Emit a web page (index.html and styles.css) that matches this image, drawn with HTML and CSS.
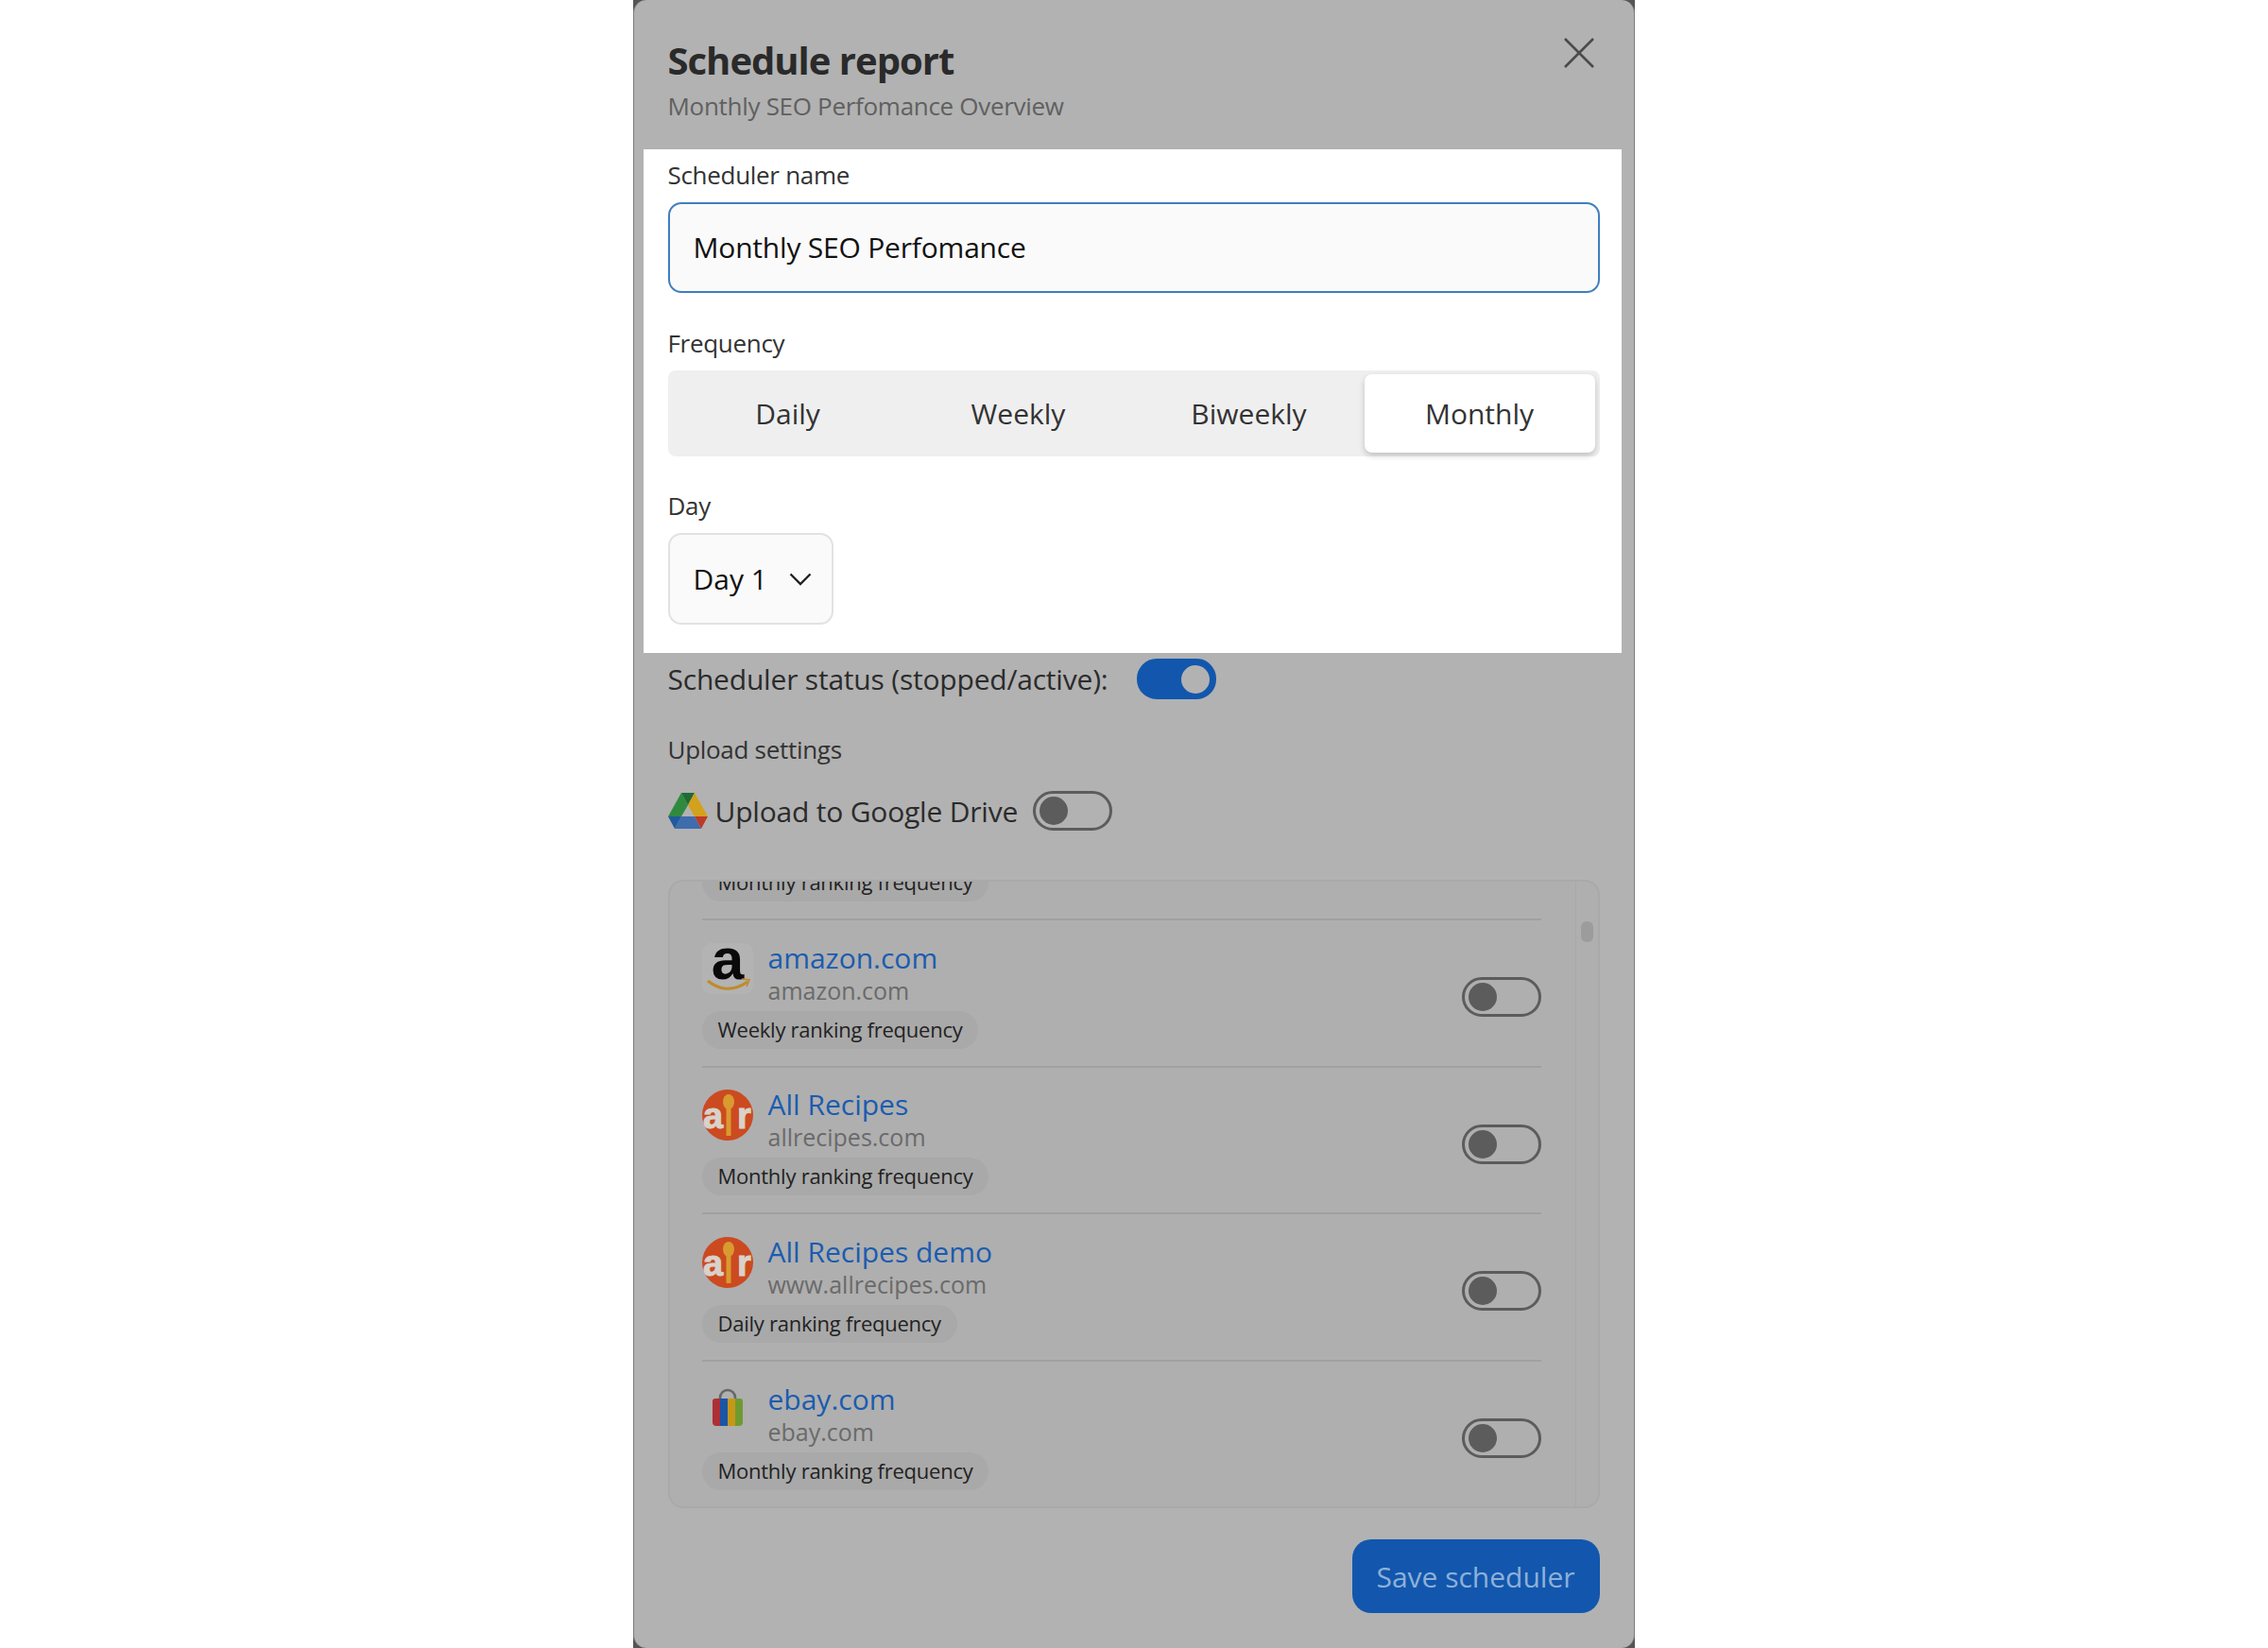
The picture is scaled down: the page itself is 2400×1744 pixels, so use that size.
FILE: index.html
```html
<!DOCTYPE html>
<html lang="en">
<head>
  <meta charset="UTF-8" />
  <title>Schedule report</title>
  <link rel="stylesheet" href="styles.css">
</head>
<body>

  <div class="frame">
  <div class="modal">

    <!-- Header -->
    <header class="modal-head">
      <div>
        <h1>Schedule report</h1>
        <p class="subtitle">Monthly SEO Perfomance Overview</p>
      </div>
      <svg class="close" viewBox="0 0 32 32" width="32" height="32">
        <path d="M1 1 L31 31 M31 1 L1 31" fill="none" stroke="#4a4a4a" stroke-width="2.6" />
      </svg>
    </header>

    <!-- Highlighted settings -->
    <section class="spotlight">
      <div class="label">Scheduler name</div>
      <div class="input">Monthly SEO Perfomance</div>

      <div class="label gap">Frequency</div>
      <div class="segments">
        <div class="segment">Daily</div>
        <div class="segment">Weekly</div>
        <div class="segment">Biweekly</div>
        <div class="segment active">Monthly</div>
      </div>

      <div class="label gap-day">Day</div>
      <div class="select">
        <span>Day 1</span>
        <svg viewBox="0 0 24 14" width="24" height="14">
          <path d="M1.5 1.5 L12 12 L22.5 1.5" fill="none" stroke="#222" stroke-width="2.4" />
        </svg>
      </div>
    </section>

    <!-- Dimmed settings -->
    <section class="dimmed">
      <div class="status-row">
        <span>Scheduler status (stopped/active):</span>
        <div class="toggle on"></div>
      </div>

      <div class="label upload-label">Upload settings</div>

      <div class="drive-row">
        <svg viewBox="0 0 42 38" width="42" height="38">
          <polygon points="14,0 21,13 14,25 0,25" fill="#2f8a3f" />
          <polygon points="14,0 28,0 21,13" fill="#1f6b35" />
          <polygon points="28,0 42,25 28,25 21,13" fill="#d3a11c" />
          <polygon points="14,25 28,25 35,38 7,38" fill="#3e6cad" />
          <polygon points="0,25 14,25 7,38" fill="#1f5a9c" />
          <polygon points="28,25 42,25 35,38" fill="#bb3a2a" />
        </svg>
        <span>Upload to Google Drive</span>
        <div class="toggle"></div>
      </div>

      <div class="site-box">
        <div class="site-list">
          <div class="site-cut">
            <span class="chip">Monthly ranking frequency</span>
          </div>

          <div class="site">
            <div>
              <div class="site-head">
                <svg class="site-icon" viewBox="0 0 54 54">
                  <rect width="54" height="54" rx="9" fill="#b3b3b3" />
                  <text class="logo-a" x="27" y="38" text-anchor="middle">a</text>
                  <path d="M6 40 Q26 56 48 41" fill="none" stroke="#c08a2c" stroke-width="3" />
                  <path d="M42 38 L50 39 L47 46" fill="none" stroke="#c08a2c" stroke-width="1.6" />
                </svg>
                <div>
                  <div class="site-name">amazon.com</div>
                  <div class="site-url">amazon.com</div>
                </div>
              </div>
              <span class="chip">Weekly ranking frequency</span>
            </div>
            <div class="toggle"></div>
          </div>

          <div class="site">
            <div>
              <div class="site-head">
                <svg class="site-icon" viewBox="0 0 54 54">
                  <circle cx="27" cy="27" r="27" fill="#cc4a20" />
                  <text class="logo-air" x="1" y="41">a</text>
                  <text class="logo-air" x="37" y="41">r</text>
                  <ellipse cx="28" cy="13" rx="6" ry="8" fill="#d99a30" />
                  <rect x="25.5" y="18" width="5" height="31" fill="#d99a30" />
                </svg>
                <div>
                  <div class="site-name">All Recipes</div>
                  <div class="site-url">allrecipes.com</div>
                </div>
              </div>
              <span class="chip">Monthly ranking frequency</span>
            </div>
            <div class="toggle"></div>
          </div>

          <div class="site">
            <div>
              <div class="site-head">
                <svg class="site-icon" viewBox="0 0 54 54">
                  <circle cx="27" cy="27" r="27" fill="#cc4a20" />
                  <text class="logo-air" x="1" y="41">a</text>
                  <text class="logo-air" x="37" y="41">r</text>
                  <ellipse cx="28" cy="13" rx="6" ry="8" fill="#d99a30" />
                  <rect x="25.5" y="18" width="5" height="31" fill="#d99a30" />
                </svg>
                <div>
                  <div class="site-name">All Recipes demo</div>
                  <div class="site-url">www.allrecipes.com</div>
                </div>
              </div>
              <span class="chip">Daily ranking frequency</span>
            </div>
            <div class="toggle"></div>
          </div>

          <div class="site">
            <div>
              <div class="site-head">
                <svg class="site-icon" viewBox="0 0 54 54">
                  <path d="M19 17 V14 A8 8 0 0 1 35 14 V17" fill="none" stroke="#686868" stroke-width="2.6" />
                  <path d="M14 15 H19 V44 H15 Q11 44 11 40 V18 Q11 15 14 15 Z" fill="#ad3035" />
                  <rect x="19" y="15" width="8" height="29" fill="#1a55a8" />
                  <rect x="27" y="15" width="8" height="29" fill="#c6981a" />
                  <path d="M35 15 H40 Q43 15 43 18 V40 Q43 44 39 44 H35 Z" fill="#6f9a30" />
                </svg>
                <div>
                  <div class="site-name">ebay.com</div>
                  <div class="site-url">ebay.com</div>
                </div>
              </div>
              <span class="chip">Monthly ranking frequency</span>
            </div>
            <div class="toggle"></div>
          </div>
        </div>

        <div class="scroll-track">
          <div class="scroll-thumb"></div>
        </div>
      </div>

      <div class="actions">
        <button class="save">Save scheduler</button>
      </div>
    </section>

  </div>
  </div>

</body>
</html>
```

FILE: styles.css
```css
body {
  font-family: "Open Sans", Arial, sans-serif;
  background-color: #fff;
  margin: 0;
  display: flex;
  justify-content: center;
}
.frame {
  width: 1060px;
  height: 1744px;
  margin-left: -1px;
  background-color: #555;
}
.modal {
  height: 1744px;
  box-sizing: border-box;
  background-color: #b2b2b2;
  border-left: 1px solid #7d7d7d;
  border-right: 1px solid #7d7d7d;
  border-radius: 14px;
  color: #2b2b2b;
  overflow: hidden;
}
.modal-head {
  height: 158px;
  box-sizing: border-box;
  padding: 40px 42px 0 36px;
  display: flex;
  justify-content: space-between;
  align-items: flex-start;
}
h1 {
  font-size: 40px;
  line-height: 48px;
  font-weight: 700;
  letter-spacing: -1px;
  margin: 0;
  color: #2a2a2a;
}
.subtitle {
  font-size: 26px;
  line-height: 36px;
  letter-spacing: -0.3px;
  margin: 6px 0 0;
  color: #606060;
}
.close {
  display: block;
}
.spotlight {
  background-color: #fff;
  margin: 0 13px 0 10px;
  padding: 8px 23px 30px 26px;
}
.label {
  font-size: 26px;
  line-height: 38px;
  letter-spacing: -0.3px;
  margin-bottom: 10px;
  color: #333;
}
.label.gap {
  margin-top: 34px;
}
.label.gap-day {
  margin-top: 33px;
}
.input {
  height: 96px;
  box-sizing: border-box;
  border: 2px solid #3f7fbf;
  border-radius: 14px;
  background-color: #fafafa;
  padding: 0 25px;
  font-size: 30px;
  font-weight: 500;
  line-height: 92px;
  letter-spacing: -0.2px;
  color: #111;
}
.segments {
  height: 91px;
  box-sizing: border-box;
  padding: 4px 5px;
  background-color: #efefef;
  border-radius: 8px;
  display: grid;
  grid-template-columns: repeat(4, 1fr);
}
.segment {
  font-size: 30px;
  line-height: 83px;
  text-align: center;
  color: #333;
  border-radius: 8px;
}
.segment.active {
  background-color: #fff;
  box-shadow: 0 3px 6px rgba(0, 0, 0, 0.2);
}
.select {
  width: 175px;
  height: 97px;
  box-sizing: border-box;
  border: 2px solid #e2e2e2;
  border-radius: 14px;
  background-color: #fafafa;
  padding: 0 21px 0 25px;
  display: flex;
  justify-content: space-between;
  align-items: center;
  font-size: 30px;
  font-weight: 500;
  color: #111;
}
.dimmed {
  padding: 6px 36px 0 36px;
}
.status-row {
  display: flex;
  align-items: center;
  gap: 30px;
  font-size: 30px;
  letter-spacing: -0.2px;
}
.toggle {
  width: 84px;
  height: 42px;
  box-sizing: border-box;
  border: 3px solid #5c5c5c;
  border-radius: 21px;
  display: flex;
  align-items: center;
  padding: 0 4px;
  flex-shrink: 0;
}
.toggle::before {
  content: "";
  width: 30px;
  height: 30px;
  border-radius: 50%;
  background-color: #5c5c5c;
}
.toggle.on {
  height: 43px;
  background-color: #1257ad;
  border-color: #1257ad;
  justify-content: flex-end;
}
.toggle.on::before {
  background-color: #b2b2b2;
}
.upload-label {
  margin: 34px 0 25px;
}
.drive-row {
  display: flex;
  align-items: center;
  font-size: 30px;
  letter-spacing: -0.2px;
}
.drive-row span {
  margin: 0 16px 0 8px;
}
.site-box {
  height: 665px;
  box-sizing: border-box;
  margin-top: 52px;
  border: 2px solid #a9a9a9;
  border-radius: 16px;
  background-color: #afafaf;
  display: flex;
  overflow: hidden;
}
.site-list {
  flex: 1;
  padding: 0 36px 0 34px;
}
.site-cut {
  height: 39px;
  box-sizing: border-box;
  padding-bottom: 18px;
  display: flex;
  align-items: flex-end;
}
.site {
  height: 155.6px;
  box-sizing: border-box;
  border-top: 2px solid #a0a0a0;
  padding: 23px 0 18px;
  display: flex;
  justify-content: space-between;
  align-items: center;
}
.site .toggle {
  margin-top: 4px;
}
.site-head {
  display: flex;
  gap: 16px;
}
.site-icon {
  width: 54px;
  height: 54px;
  margin-top: 1px;
  flex-shrink: 0;
}
.logo-a {
  font-family: "Liberation Sans", Arial, sans-serif;
  font-size: 62px;
  font-weight: 700;
  fill: #0a0a0a;
}
.logo-air {
  font-family: "Liberation Sans", Arial, sans-serif;
  font-size: 38px;
  font-weight: 700;
  fill: #d9d2ca;
  stroke: #d9d2ca;
  stroke-width: 1;
}
.site-name {
  font-size: 30px;
  line-height: 34px;
  font-weight: 500;
  color: #1a5cb0;
}
.site-url {
  font-size: 25px;
  line-height: 34px;
  color: #6a6a6a;
}
.chip {
  display: block;
  width: fit-content;
  height: 40px;
  box-sizing: border-box;
  margin-top: 5px;
  padding: 0 17px;
  border-radius: 20px;
  background-color: #a9a9a9;
  font-size: 22px;
  line-height: 38px;
  letter-spacing: -0.25px;
  color: #222;
  white-space: nowrap;
}
.scroll-track {
  width: 24px;
  flex-shrink: 0;
  border-left: 1px solid #a8a8a8;
  padding: 42px 5px 0 5px;
  box-sizing: border-box;
}
.scroll-thumb {
  height: 22px;
  border-radius: 6px;
  background-color: #9c9c9c;
}
.actions {
  display: flex;
  justify-content: flex-end;
  margin-top: 33px;
}
.save {
  width: 262px;
  height: 78px;
  border: none;
  border-radius: 20px;
  background-color: #1257ad;
  color: #8fb0d8;
  font-family: inherit;
  font-size: 30px;
  font-weight: 500;
  cursor: pointer;
}
```
